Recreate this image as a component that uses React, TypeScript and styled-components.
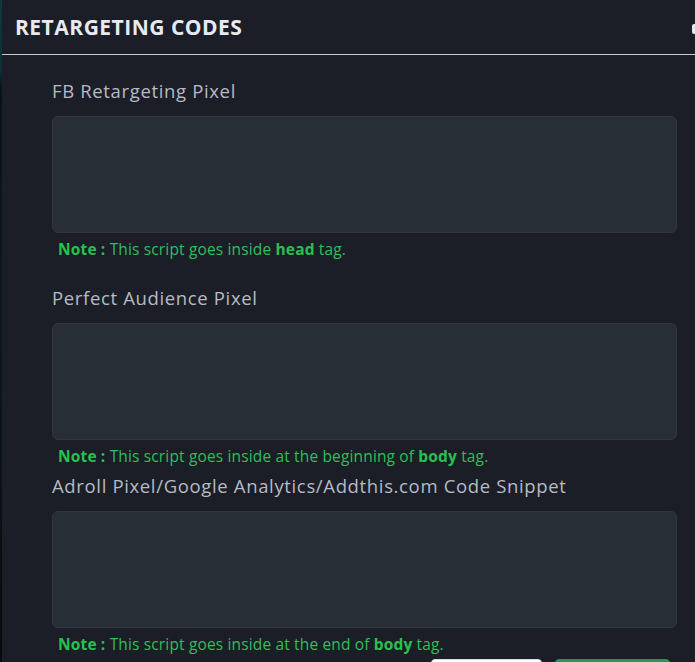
import React from "react";
import styled, { createGlobalStyle } from "styled-components";

const GlobalStyle = createGlobalStyle`
  html, body {
    margin: 0;
    padding: 0;
    background: #1b1e26;
    overflow: hidden;
  }
  * {
    box-sizing: border-box;
  }
`;

const Screen = styled.div`
  display: flex;
  width: 695px;
  height: 662px;
  overflow: hidden;
  background: #1b1e26;
`;

// sliver of the page behind the modal
const Backdrop = styled.div`
  flex: 0 0 2px;
  background: linear-gradient(
    180deg,
    #0f3a3c 0px,
    #0d2f36 70px,
    #0a1116 90px,
    #0d171b 300px,
    #080b0e 662px
  );
`;

const Modal = styled.section`
  flex: 1;
  display: flex;
  flex-direction: column;
  min-width: 0;
  background: #1b1e26;
  font-family: "Open Sans", "Noto Sans", sans-serif;

  & > * {
    flex-shrink: 0;
  }
`;

const Header = styled.header`
  display: flex;
  align-items: center;
  justify-content: space-between;
  height: 55px;
  padding-left: 13px;
  border-bottom: 1px solid #c9ccd3;
`;

const Title = styled.h2`
  margin: 0;
  font-size: 21px;
  line-height: 28px;
  font-weight: 700;
  letter-spacing: 0.5px;
  color: #e8eaef;
`;

const CloseButton = styled.span`
  width: 3px;
  height: 10px;
  margin-top: 4px;
  border-radius: 2px 0 0 2px;
  background: #e4e6ea;
`;

const Body = styled.div`
  display: flex;
  flex-direction: column;
  padding: 24px 18px 0 50px;
`;

const Field = styled.div<{ $gap: number }>`
  display: flex;
  flex-direction: column;
  margin-bottom: ${({ $gap }) => $gap}px;
`;

const Label = styled.label`
  font-size: 18.5px;
  line-height: 24px;
  letter-spacing: 0.65px;
  color: #b6bac5;
  margin-bottom: 13px;
`;

const CodeBox = styled.textarea`
  height: 117px;
  resize: none;
  border: 1px solid #30363f;
  border-radius: 6px;
  background: #282e36;
  outline: none;
`;

const Note = styled.p`
  margin: 6px 0 0 6px;
  font-size: 15.5px;
  line-height: 20px;
  letter-spacing: 0.15px;
  color: #2fbf5a;

  b {
    font-weight: 700;
    color: #27c150;
  }
`;

const Footer = styled.div`
  display: flex;
  justify-content: flex-end;
  gap: 13px;
  padding: 5px 25px 0 0;
`;

const Button = styled.button<{ $primary?: boolean }>`
  width: ${({ $primary }) => ($primary ? 115 : 111)}px;
  height: 36px;
  border-radius: 4px;
  border: 1px solid ${({ $primary }) => ($primary ? "#1e9a55" : "#d7d9dd")};
  background: ${({ $primary }) => ($primary ? "#1f9c5b" : "#ffffff")};
`;

const fields = [
  {
    label: "FB Retargeting Pixel",
    note: (
      <>
        This script goes inside <b>head</b> tag.
      </>
    ),
    gap: 27,
  },
  {
    label: "Perfect Audience Pixel",
    note: (
      <>
        This script goes inside at the beginning of <b>body</b> tag.
      </>
    ),
    gap: 8,
  },
  {
    label: "Adroll Pixel/Google Analytics/Addthis.com Code Snippet",
    note: (
      <>
        This script goes inside at the end of <b>body</b> tag.
      </>
    ),
    gap: 0,
  },
];

const App: React.FC = () => {
  return (
    <>
      <GlobalStyle />
      <Screen>
        <Backdrop />
        <Modal>
          <Header>
            <Title>RETARGETING CODES</Title>
            <CloseButton />
          </Header>
          <Body>
            {fields.map((field) => (
              <Field key={field.label} $gap={field.gap}>
                <Label>{field.label}</Label>
                <CodeBox />
                <Note>
                  <b>Note :</b> {field.note}
                </Note>
              </Field>
            ))}
          </Body>
          <Footer>
            <Button />
            <Button $primary />
          </Footer>
        </Modal>
      </Screen>
    </>
  );
};

export default App;
